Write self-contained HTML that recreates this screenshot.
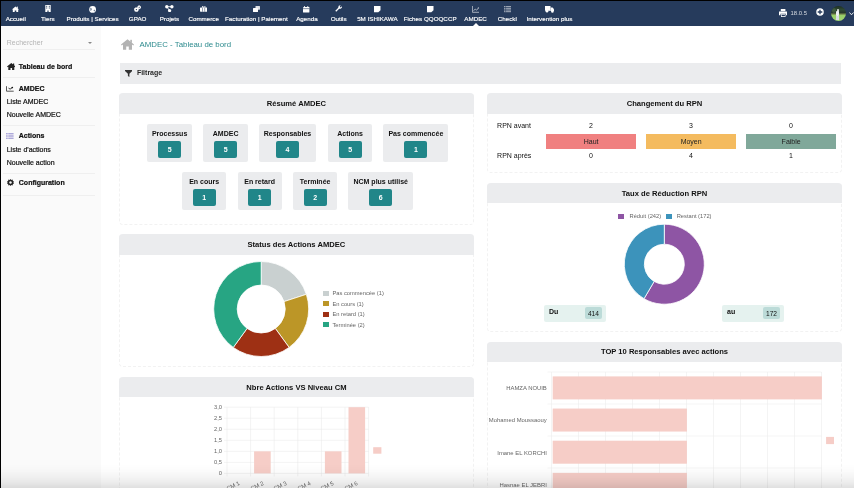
<!DOCTYPE html>
<html><head><meta charset="utf-8">
<style>
*{margin:0;padding:0;box-sizing:border-box}
html,body{width:854px;height:488px;overflow:hidden;background:#fff;font-family:"Liberation Sans",sans-serif;color:#222}
.a{position:absolute}
#frameT{left:0;top:0;width:854px;height:1px;background:#000}
#frameL{left:0;top:0;width:1px;height:488px;background:#000;z-index:50}
#nav{left:1px;top:1px;width:853px;height:24.5px;background:#263b5c}
.nt{position:absolute;top:15.2px;width:100px;color:#fff;font-size:6.25px;text-align:center;white-space:nowrap;-webkit-text-stroke:0.15px #fff}
#side{left:1px;top:25px;width:100px;height:463px;background:#fafafa}
.sl{position:absolute;left:5.7px;font-size:7px;color:#111;white-space:nowrap;-webkit-text-stroke:0.2px #111}
.sb{font-weight:bold;left:17.8px}
.hr{position:absolute;left:2.2px;width:91.5px;height:1px;background:#efefef}
.card{position:absolute;background:#fff;border:1px dashed #f2f2f2;border-radius:4px}
.ch{position:absolute;left:-1px;top:-1px;right:-1px;border-radius:4px 4px 0 0;height:20.4px;background:#ebecee;font-weight:bold;font-size:7.6px;text-align:center;line-height:22.4px;color:#111}
.box{position:absolute;height:38px;background:#ebecee;border-radius:2px;text-align:center}
.box .l{position:absolute;top:6px;left:0;right:0;font-size:7px;font-weight:bold;color:#111;white-space:nowrap}
.box .b{position:absolute;top:17px;left:50%;margin-left:-11.5px;width:23px;height:16.5px;background:#218689;border-radius:2px;color:#fff;font-weight:bold;font-size:7px;line-height:17.6px}
.rt{position:absolute;font-size:7px;color:#111;white-space:nowrap}
.lv{position:absolute;height:14.6px;width:90.3px;font-size:7px;text-align:center;line-height:15.6px;color:#222}
.leg{position:absolute;font-size:5.75px;color:#666;white-space:nowrap}
.sq{position:absolute;width:6px;height:5px}
#fade{left:0;top:464px;width:854px;height:24px;background:linear-gradient(to bottom,rgba(0,0,0,0) 0%,rgba(0,0,0,0.012) 25%,rgba(0,0,0,0.035) 50%,rgba(0,0,0,0.07) 75%,rgba(0,0,0,0.12) 100%);z-index:40}
</style></head><body><div id="wrap" style="position:absolute;left:0;top:0;width:854px;height:488px;will-change:transform">
<div class="a" id="frameT"></div>
<div class="a" id="frameL"></div>
<div class="a" id="side">
  <div class="sl" style="top:13.5px;color:#b5b5b5;-webkit-text-stroke:0">Rechercher</div>
  <div class="a" style="left:86.5px;top:16.5px;width:0;height:0;border-left:2px solid transparent;border-right:2px solid transparent;border-top:2.5px solid #888"></div>
  <div class="hr" style="top:24px"></div>
  <div class="sl sb" style="top:37.5px">Tableau de bord</div>
  <div class="hr" style="top:52px"></div>
  <div class="sl sb" style="top:60px">AMDEC</div>
  <div class="sl" style="top:72.8px">Liste AMDEC</div>
  <div class="sl" style="top:86.4px">Nouvelle AMDEC</div>
  <div class="hr" style="top:99.5px"></div>
  <div class="sl sb" style="top:107px">Actions</div>
  <div class="sl" style="top:121px">Liste d'actions</div>
  <div class="sl" style="top:134.2px">Nouvelle action</div>
  <div class="hr" style="top:147.5px"></div>
  <div class="sl sb" style="top:154.3px">Configuration</div>
  <div class="hr" style="top:169.5px"></div>
</div>
<div class="a" id="nav"></div>
<div class="nt" style="left:-34.25px">Accueil</div>
<svg class="a" style="left:12.40px;top:5.6px" width="7" height="7.5" viewBox="0 0 7 7.5"><path d="M3.5 0.4L6.8 3.2L6.2 3.7V6H4.3V4.5H2.7V6H0.8V3.7L0.2 3.2Z" fill="#fff"/><rect x="4.8" y="0.6" width="1" height="1.8" fill="#fff"/></svg>
<div class="nt" style="left:-2.20px">Tiers</div>
<svg class="a" style="left:44.90px;top:5.2px" width="6" height="7.5" viewBox="0 0 6 7.5"><path d="M0.3 0H5.7V7H3.6V5.4H2.4V7H0.3Z" fill="#fff"/><rect x="1.2" y="0.8" width="1" height="1" fill="#263b5c"/><rect x="3.8" y="0.8" width="1" height="1" fill="#263b5c"/><rect x="1.2" y="2.5" width="1" height="1" fill="#263b5c"/><rect x="3.8" y="2.5" width="1" height="1" fill="#263b5c"/></svg>
<div class="nt" style="left:42.55px">Produits | Services</div>
<svg class="a" style="left:89.00px;top:5.6px" width="7.4" height="7.5" viewBox="0 0 7.4 7.5"><circle cx="3.6" cy="3.4" r="3.4" fill="#fff"/><path d="M1.5 1.5Q3 2.5 2.5 4L1.6 5Z M4.5 4.5L5.8 3.5L5.5 5.5Z" fill="#263b5c"/></svg>
<div class="nt" style="left:87.65px">GPAO</div>
<svg class="a" style="left:133.9px;top:5.2px" width="7.4" height="7" viewBox="0 0 7.4 7"><circle cx="2.4" cy="4.6" r="2.2" fill="#fff" stroke="#fff" stroke-width="0.6" stroke-dasharray="0.8 0.6"/><circle cx="2.4" cy="4.6" r="0.7" fill="#263b5c"/><circle cx="5.2" cy="2.2" r="1.7" fill="#fff" stroke="#fff" stroke-width="0.5" stroke-dasharray="0.7 0.5"/><circle cx="5.2" cy="2.2" r="0.55" fill="#263b5c"/></svg>
<div class="nt" style="left:119.45px">Projets</div>
<svg class="a" style="left:165.1px;top:5.2px" width="8.7" height="7.2" viewBox="0 0 8.7 7.2"><path d="M1.8 1.7H7M1.8 1.7L4.6 5.6" stroke="#fff" stroke-width="0.9"/><circle cx="1.8" cy="1.7" r="1.7" fill="#fff"/><circle cx="6.9" cy="1.7" r="1.7" fill="#fff"/><circle cx="4.6" cy="5.6" r="1.6" fill="#fff"/></svg>
<div class="nt" style="left:153.70px">Commerce</div>
<svg class="a" style="left:199.70px;top:5.9px" width="7.5" height="7.5" viewBox="0 0 7.5 7.5"><rect x="0" y="1.5" width="7.5" height="4.2" rx="0.6" fill="#fff"/><rect x="2.5" y="0" width="2.5" height="1.8" fill="none" stroke="#fff" stroke-width="0.7"/><rect x="2.4" y="1.5" width="0.5" height="4.2" fill="#263b5c"/><rect x="4.6" y="1.5" width="0.5" height="4.2" fill="#263b5c"/></svg>
<div class="nt" style="left:206.40px">Facturation | Paiement</div>
<svg class="a" style="left:253.00px;top:5.7px" width="7.2" height="7.5" viewBox="0 0 7.2 7.5"><rect x="2.5" y="0" width="4.5" height="3.8" rx="0.5" fill="#fff" opacity="0.85"/><rect x="0" y="2" width="5" height="4" rx="0.5" fill="#fff"/></svg>
<div class="nt" style="left:256.95px">Agenda</div>
<svg class="a" style="left:303.20px;top:5.7px" width="6.4" height="7.5" viewBox="0 0 6.4 7.5"><rect x="0" y="1" width="6.4" height="5.6" rx="0.5" fill="#fff"/><rect x="1.2" y="0" width="0.8" height="1.5" fill="#fff"/><rect x="4.4" y="0" width="0.8" height="1.5" fill="#fff"/><rect x="0" y="2.5" width="6.4" height="0.6" fill="#263b5c"/></svg>
<div class="nt" style="left:288.65px">Outils</div>
<svg class="a" style="left:334.90px;top:5.4px" width="7.2" height="7.5" viewBox="0 0 7.2 7.5"><path d="M7 1.2L5.6 2.4L4.8 1.8L5.6 0.3A2.2 2.2 0 0 0 3.3 2.8L0.3 5.8L1.2 6.7L4.2 3.7A2.2 2.2 0 0 0 7 1.2Z" fill="#fff"/></svg>
<div class="nt" style="left:327.40px">5M ISHIKAWA</div>
<svg class="a" style="left:374.40px;top:5.5px" width="6.5" height="7.5" viewBox="0 0 6.5 7.5"><path d="M0 0H6.5V4.3L4.3 6.3H0Z" fill="#fff"/></svg>
<div class="nt" style="left:380.20px">Fiches QQOQCCP</div>
<svg class="a" style="left:427.05px;top:5.5px" width="6.5" height="7.5" viewBox="0 0 6.5 7.5"><path d="M0 0H6.5V4.3L4.3 6.3H0Z" fill="#fff"/></svg>
<div class="nt" style="left:425.60px">AMDEC</div>
<svg class="a" style="left:471.60px;top:5.5px;opacity:0.75" width="7.4" height="7.5" viewBox="0 0 7.4 7.5"><path d="M0.4 0V6.3H7.4" stroke="#fff" stroke-width="0.8" fill="none"/><path d="M1.6 4.8L3.2 3L4.6 4.2L6.6 1.8" stroke="#fff" stroke-width="0.8" fill="none"/><path d="M5.6 1.4H7V2.8Z" fill="#fff"/></svg>
<div class="nt" style="left:457.30px">Checkl</div>
<svg class="a" style="left:504.35px;top:5.5px;opacity:0.8" width="7" height="7.5" viewBox="0 0 7 7.5"><path d="M0 0.6H7M0 2.3H7M0 4H7M0 5.7H7" stroke="#fff" stroke-width="0.9" opacity="0.85"/><path d="M1.6 0V6.4" stroke="#263b5c" stroke-width="0.5"/></svg>
<div class="nt" style="left:499.55px">Intervention plus</div>
<svg class="a" style="left:544.85px;top:5.6px" width="9.4" height="7.5" viewBox="0 0 9.4 7.5"><rect x="0" y="0" width="5.5" height="4.8" fill="#fff"/><path d="M5.5 1.6H7.6L9.3 3.5V5H5.5Z" fill="#fff"/><circle cx="2" cy="5.3" r="1.3" fill="#fff"/><circle cx="7.4" cy="5.5" r="1.3" fill="#fff"/></svg>
<svg class="a" style="left:778.7px;top:9.2px" width="8.5" height="8" viewBox="0 0 8.5 8"><path d="M1.8 0H6.4V2.2H1.8Z" fill="#fff"/><path d="M0 2.6H8.5V6.2H7V4.8H1.5V6.2H0Z" fill="#fff"/><rect x="2" y="5.2" width="4.5" height="2.8" fill="#fff"/><rect x="2.6" y="5.8" width="3.3" height="1.4" fill="#263b5c"/></svg>
<div class="a" style="left:790.6px;top:9.8px;font-size:5.9px;color:#fff;opacity:0.8">18.0.5</div>
<svg class="a" style="left:815.2px;top:7.4px" width="10" height="10" viewBox="0 0 10 10"><circle cx="5" cy="5" r="3.75" fill="#fff"/><path d="M5 2.7V7.3M2.7 5H7.3" stroke="#263b5c" stroke-width="1.3"/></svg>
<div class="a" style="left:830.5px;top:5.6px;width:15.2px;height:15px;border-radius:50%;overflow:hidden;background:linear-gradient(to bottom,#1e2f22 0%,#2f4a33 25%,#26382a 45%,#6d7a4a 53%,#98cf68 62%,#a2d673 100%)"><div class="a" style="left:1px;top:2px;width:4px;height:5px;background:#4d6a4a;border-radius:50%;opacity:0.6"></div><div class="a" style="left:6.3px;top:3.8px;width:2.2px;height:2.2px;background:#d9d9d9;border-radius:50%"></div><div class="a" style="left:5.6px;top:5.8px;width:3.4px;height:4.8px;background:#eef0f4;border-radius:1px"></div><div class="a" style="left:5.9px;top:10.5px;width:2.8px;height:3.8px;background:#d8dce2"></div></div>
<svg class="a" style="left:848.8px;top:11.6px" width="5" height="3.6" viewBox="0 0 5 3.6"><path d="M0.4 0.5L2.5 2.8L4.6 0.5" stroke="#fff" stroke-width="0.9" fill="none"/></svg>
<svg class="a" style="left:472.5px;top:22.8px" width="6" height="3" viewBox="0 0 6 3"><path d="M0 3L3 0L6 3Z" fill="#fff"/></svg>



<!-- breadcrumb -->
<div class="a" style="left:139.6px;top:40px;font-size:7.85px;color:#2d8b8e;white-space:nowrap">AMDEC - Tableau de bord</div>

<!-- filtrage -->
<div class="a" style="left:119.7px;top:63.2px;width:721.5px;height:20.5px;background:#ebecee"></div>
<div class="a" style="left:136.9px;top:69px;font-size:7px;font-weight:bold;color:#2a2a2a">Filtrage</div>

<!-- Resume card -->
<div class="card" style="left:119px;top:93.4px;width:354.8px;height:131.9px">
  <div class="ch" style="height:20.4px">Résumé AMDEC</div>
</div>

<!-- Changement RPN -->
<div class="card" style="left:487.2px;top:93.4px;width:354.6px;height:79.9px">
  <div class="ch" style="height:20.4px">Changement du RPN</div>
</div>

<!-- Taux -->
<div class="card" style="left:487.2px;top:182.7px;width:354.6px;height:149px">
  <div class="ch" style="height:20.7px;line-height:21.6px">Taux de Réduction RPN</div>
</div>

<!-- Status -->
<div class="card" style="left:119px;top:234.3px;width:354.8px;height:132.8px">
  <div class="ch" style="height:21.2px;line-height:22px">Status des Actions AMDEC</div>
</div>

<!-- Nbre -->
<div class="card" style="left:119px;top:377.1px;width:354.8px;height:120px">
  <div class="ch" style="height:20.3px;line-height:21.8px">Nbre Actions VS Niveau CM</div>
</div>

<!-- TOP 10 -->
<div class="card" style="left:487.2px;top:342px;width:354.6px;height:160px">
  <div class="ch" style="height:19.8px;line-height:20.8px">TOP 10 Responsables avec actions</div>
</div>


<svg class="a" style="left:6.5px;top:63px" width="8.6" height="7.2" viewBox="0 0 8.6 7.2"><path d="M4.3 0L8.6 3.6L7.9 4.3L7.3 3.8V7.2H5.1V5H3.5V7.2H1.3V3.8L0.7 4.3L0 3.6Z" fill="#222"/><rect x="6" y="0.5" width="1.2" height="2" fill="#222"/></svg>
<svg class="a" style="left:6.1px;top:86px" width="7.8" height="5.8" viewBox="0 0 7.8 5.8"><path d="M0.5 0.2V5.2H7.7" stroke="#555" stroke-width="1" fill="none"/><path d="M2.5 2.1L4.1 3.1L6.3 1.6" stroke="#222" stroke-width="0.9" fill="none"/><circle cx="6.3" cy="1.5" r="0.85" fill="#111"/></svg>
<svg class="a" style="left:6.2px;top:132.8px" width="7.6" height="6" viewBox="0 0 7.6 6"><path d="M0 0.6H7.6M0 2.2H7.6M0 3.8H7.6M0 5.4H7.6" stroke="#a5a0d6" stroke-width="1"/><path d="M2 0V6" stroke="#f8f8f8" stroke-width="0.5"/></svg>
<svg class="a" style="left:6.8px;top:179px" width="7" height="7" viewBox="0 0 7 7"><path d="M3.5 0L4.3 0.9L5.6 0.6L5.9 1.9L7 2.6L6.4 3.5L7 4.4L5.9 5.1L5.6 6.4L4.3 6.1L3.5 7L2.7 6.1L1.4 6.4L1.1 5.1L0 4.4L0.6 3.5L0 2.6L1.1 1.9L1.4 0.6L2.7 0.9Z" fill="#222"/><circle cx="3.5" cy="3.5" r="1.2" fill="#f8f8f8"/></svg>
<svg class="a" style="left:120.7px;top:39px" width="13" height="10.8" viewBox="0 0 13 10.8"><path d="M6.5 0.3L13 5.6L12.3 6.4L11 5.4V10.8H7.8V7.4H5.2V10.8H2V5.4L0.7 6.4L0 5.6Z" fill="#b3b3b3"/><rect x="9.3" y="0.8" width="1.6" height="3" fill="#b3b3b3"/></svg>
<svg class="a" style="left:124.8px;top:69.7px" width="7.3" height="7" viewBox="0 0 7.3 7"><path d="M0 0H7.3V1L4.4 3.8V7L2.9 6V3.8L0 1Z" fill="#333"/></svg>
<!--CONTENT-->
<div class="box" style="left:147px;top:124px;width:45.2px"><div class="l">Processus</div><div class="b">5</div></div>
<div class="box" style="left:203.3px;top:124px;width:44.7px"><div class="l">AMDEC</div><div class="b">5</div></div>
<div class="box" style="left:258.6px;top:124px;width:57.8px"><div class="l">Responsables</div><div class="b">4</div></div>
<div class="box" style="left:328px;top:124px;width:44.2px"><div class="l">Actions</div><div class="b">5</div></div>
<div class="box" style="left:383.3px;top:124px;width:65.1px"><div class="l">Pas commencée</div><div class="b">1</div></div>
<div class="box" style="left:182.2px;top:172.2px;width:43.9px"><div class="l">En cours</div><div class="b">1</div></div>
<div class="box" style="left:237.5px;top:172.2px;width:44.2px"><div class="l">En retard</div><div class="b">1</div></div>
<div class="box" style="left:292.9px;top:172.2px;width:44.5px"><div class="l">Terminée</div><div class="b">2</div></div>
<div class="box" style="left:348.3px;top:172.2px;width:64.8px"><div class="l">NCM plus utilisé</div><div class="b">6</div></div>
<div class="rt" style="left:497.1px;top:122.2px">RPN avant</div>
<div class="rt" style="left:497.1px;top:151.7px">RPN après</div>
<div class="rt" style="left:571px;width:40px;text-align:center;top:122.2px">2</div>
<div class="rt" style="left:571px;width:40px;text-align:center;top:151.7px">0</div>
<div class="rt" style="left:671px;width:40px;text-align:center;top:122.2px">3</div>
<div class="rt" style="left:671px;width:40px;text-align:center;top:151.7px">4</div>
<div class="rt" style="left:771px;width:40px;text-align:center;top:122.2px">0</div>
<div class="rt" style="left:771px;width:40px;text-align:center;top:151.7px">1</div>
<div class="lv" style="left:546px;top:134.2px;background:#f08080">Haut</div>
<div class="lv" style="left:646px;top:134.2px;background:#f4bb5f">Moyen</div>
<div class="lv" style="left:746px;top:134.2px;background:#80a89a">Faible</div>
<div class="sq" style="left:618px;top:213.9px;background:#8e55a4"></div>
<div class="leg" style="left:629.5px;top:212.7px">Réduit (242)</div>
<div class="sq" style="left:665.6px;top:213.9px;background:#3c93bb"></div>
<div class="leg" style="left:676.7px;top:212.7px">Restant (172)</div>
<svg class="a" style="left:0;top:0" width="854" height="488">
<path d="M664.30 224.20A40 40 0 1 1 644.04 298.69L654.17 281.44A20 20 0 1 0 664.30 244.20Z" fill="#8e55a4" stroke="#fff" stroke-width="0.8"/>
<path d="M644.04 298.69A40 40 0 0 1 664.30 224.20L664.30 244.20A20 20 0 0 0 654.17 281.44Z" fill="#3c93bb" stroke="#fff" stroke-width="0.8"/>
<path d="M261.20 261.50A47.5 47.5 0 0 1 306.38 294.32L284.03 301.58A24 24 0 0 0 261.20 285.00Z" fill="#c9d0d0" stroke="#fff" stroke-width="0.8"/>
<path d="M306.38 294.32A47.5 47.5 0 0 1 289.12 347.43L275.31 328.42A24 24 0 0 0 284.03 301.58Z" fill="#bc9627" stroke="#fff" stroke-width="0.8"/>
<path d="M289.12 347.43A47.5 47.5 0 0 1 233.28 347.43L247.09 328.42A24 24 0 0 0 275.31 328.42Z" fill="#9e3014" stroke="#fff" stroke-width="0.8"/>
<path d="M233.28 347.43A47.5 47.5 0 0 1 261.20 261.50L261.20 285.00A24 24 0 0 0 247.09 328.42Z" fill="#27a583" stroke="#fff" stroke-width="0.8"/>
<line x1="227.00" y1="407.2" x2="227.00" y2="476.4" stroke="#e6e6e6" stroke-width="0.5"/>
<line x1="250.60" y1="407.2" x2="250.60" y2="476.4" stroke="#e6e6e6" stroke-width="0.5"/>
<line x1="274.20" y1="407.2" x2="274.20" y2="476.4" stroke="#e6e6e6" stroke-width="0.5"/>
<line x1="297.80" y1="407.2" x2="297.80" y2="476.4" stroke="#e6e6e6" stroke-width="0.5"/>
<line x1="321.40" y1="407.2" x2="321.40" y2="476.4" stroke="#e6e6e6" stroke-width="0.5"/>
<line x1="345.00" y1="407.2" x2="345.00" y2="476.4" stroke="#e6e6e6" stroke-width="0.5"/>
<line x1="368.60" y1="407.2" x2="368.60" y2="476.4" stroke="#e6e6e6" stroke-width="0.5"/>
<line x1="224" y1="407.20" x2="368.60" y2="407.20" stroke="#e6e6e6" stroke-width="0.5"/>
<line x1="224" y1="418.23" x2="368.60" y2="418.23" stroke="#e6e6e6" stroke-width="0.5"/>
<line x1="224" y1="429.27" x2="368.60" y2="429.27" stroke="#e6e6e6" stroke-width="0.5"/>
<line x1="224" y1="440.30" x2="368.60" y2="440.30" stroke="#e6e6e6" stroke-width="0.5"/>
<line x1="224" y1="451.33" x2="368.60" y2="451.33" stroke="#e6e6e6" stroke-width="0.5"/>
<line x1="224" y1="462.37" x2="368.60" y2="462.37" stroke="#e6e6e6" stroke-width="0.5"/>
<line x1="224" y1="473.40" x2="368.60" y2="473.40" stroke="#e6e6e6" stroke-width="0.5"/>
<rect x="254.10" y="451.33" width="16.6" height="22.07" fill="#f6cdc7"/>
<rect x="324.90" y="451.33" width="16.6" height="22.07" fill="#f6cdc7"/>
<rect x="348.50" y="407.20" width="16.6" height="66.20" fill="#f6cdc7"/>
<rect x="373.2" y="447.2" width="8.2" height="6.5" fill="#f6cdc7"/>
<line x1="551.50" y1="372" x2="551.50" y2="488" stroke="#e9e9e9" stroke-width="0.5"/>
<line x1="578.50" y1="372" x2="578.50" y2="488" stroke="#e9e9e9" stroke-width="0.5"/>
<line x1="605.50" y1="372" x2="605.50" y2="488" stroke="#e9e9e9" stroke-width="0.5"/>
<line x1="632.50" y1="372" x2="632.50" y2="488" stroke="#e9e9e9" stroke-width="0.5"/>
<line x1="659.50" y1="372" x2="659.50" y2="488" stroke="#e9e9e9" stroke-width="0.5"/>
<line x1="686.50" y1="372" x2="686.50" y2="488" stroke="#e9e9e9" stroke-width="0.5"/>
<line x1="713.50" y1="372" x2="713.50" y2="488" stroke="#e9e9e9" stroke-width="0.5"/>
<line x1="740.50" y1="372" x2="740.50" y2="488" stroke="#e9e9e9" stroke-width="0.5"/>
<line x1="767.50" y1="372" x2="767.50" y2="488" stroke="#e9e9e9" stroke-width="0.5"/>
<line x1="794.50" y1="372" x2="794.50" y2="488" stroke="#e9e9e9" stroke-width="0.5"/>
<line x1="821.50" y1="372" x2="821.50" y2="488" stroke="#e9e9e9" stroke-width="0.5"/>
<line x1="547.5" y1="372.00" x2="821.50" y2="372.00" stroke="#e9e9e9" stroke-width="0.5"/>
<line x1="547.5" y1="404.00" x2="821.50" y2="404.00" stroke="#e9e9e9" stroke-width="0.5"/>
<line x1="547.5" y1="436.00" x2="821.50" y2="436.00" stroke="#e9e9e9" stroke-width="0.5"/>
<line x1="547.5" y1="468.00" x2="821.50" y2="468.00" stroke="#e9e9e9" stroke-width="0.5"/>
<rect x="552.7" y="376.40" width="269.20" height="23" fill="#f6cdc7"/>
<rect x="552.7" y="408.55" width="134.20" height="23" fill="#f6cdc7"/>
<rect x="552.7" y="440.70" width="134.20" height="23" fill="#f6cdc7"/>
<rect x="552.7" y="472.85" width="134.20" height="23" fill="#f6cdc7"/>
<rect x="826.1" y="436.9" width="7.9" height="7.2" fill="#f6cdc7"/>
</svg>
<div class="leg" style="left:192px;width:30px;font-size:5.75px;text-align:right;top:403.50px">3,0</div>
<div class="leg" style="left:192px;width:30px;font-size:5.75px;text-align:right;top:414.53px">2,5</div>
<div class="leg" style="left:192px;width:30px;font-size:5.75px;text-align:right;top:425.57px">2,0</div>
<div class="leg" style="left:192px;width:30px;font-size:5.75px;text-align:right;top:436.60px">1,5</div>
<div class="leg" style="left:192px;width:30px;font-size:5.75px;text-align:right;top:447.63px">1,0</div>
<div class="leg" style="left:192px;width:30px;font-size:5.75px;text-align:right;top:458.67px">0,5</div>
<div class="leg" style="left:192px;width:30px;font-size:5.75px;text-align:right;top:469.70px">0</div>
<div class="leg" style="left:446.8px;width:100px;font-size:5.9px;text-align:right;top:385.20px">HAMZA NOUIB</div>
<div class="leg" style="left:446.8px;width:100px;font-size:5.9px;text-align:right;top:417.35px">Mohamed Moussaouy</div>
<div class="leg" style="left:446.8px;width:100px;font-size:5.9px;text-align:right;top:449.50px">Imane EL KORCHI</div>
<div class="leg" style="left:446.8px;width:100px;font-size:5.9px;text-align:right;top:481.65px">Hasnae EL JEBRI</div>
<div class="leg" style="left:178.00px;width:60px;text-align:right;top:479.5px;transform-origin:100% 0;transform:rotate(-26deg)">Niveau CM 1</div>
<div class="leg" style="left:201.60px;width:60px;text-align:right;top:479.5px;transform-origin:100% 0;transform:rotate(-26deg)">Niveau CM 2</div>
<div class="leg" style="left:225.20px;width:60px;text-align:right;top:479.5px;transform-origin:100% 0;transform:rotate(-26deg)">Niveau CM 3</div>
<div class="leg" style="left:248.80px;width:60px;text-align:right;top:479.5px;transform-origin:100% 0;transform:rotate(-26deg)">Niveau CM 4</div>
<div class="leg" style="left:272.40px;width:60px;text-align:right;top:479.5px;transform-origin:100% 0;transform:rotate(-26deg)">Niveau CM 5</div>
<div class="leg" style="left:296.00px;width:60px;text-align:right;top:479.5px;transform-origin:100% 0;transform:rotate(-26deg)">Niveau CM 6</div>
<div class="sq" style="left:323px;top:290.6px;width:6.2px;height:5px;background:#c9d0d0"></div>
<div class="leg" style="left:332.4px;top:289.9px">Pas commencée (1)</div>
<div class="sq" style="left:323px;top:301.2px;width:6.2px;height:5px;background:#bc9627"></div>
<div class="leg" style="left:332.4px;top:300.5px">En cours (1)</div>
<div class="sq" style="left:323px;top:311.8px;width:6.2px;height:5px;background:#9e3014"></div>
<div class="leg" style="left:332.4px;top:311.1px">En retard (1)</div>
<div class="sq" style="left:323px;top:322.4px;width:6.2px;height:5px;background:#27a583"></div>
<div class="leg" style="left:332.4px;top:321.7px">Terminée (2)</div>
<div class="a" style="left:543.9px;top:304.8px;width:62.3px;height:16.9px;background:#e5f2ef;border-radius:2px"></div>
<div class="a" style="left:548.9px;top:308.3px;font-size:7px;font-weight:bold;color:#111">Du</div>
<div class="a" style="left:585.1px;top:307.2px;width:16.6px;height:12px;background:#bcdbd8;border-radius:2px;font-size:6.6px;line-height:13px;text-align:center;color:#111">414</div>
<div class="a" style="left:722px;top:304.8px;width:62.3px;height:16.9px;background:#e5f2ef;border-radius:2px"></div>
<div class="a" style="left:727px;top:308.3px;font-size:7px;font-weight:bold;color:#111">au</div>
<div class="a" style="left:763.2px;top:307.2px;width:16.6px;height:12px;background:#bcdbd8;border-radius:2px;font-size:6.6px;line-height:13px;text-align:center;color:#111">172</div>
<!--/CONTENT-->
<div class="a" id="fade"></div>
</div></body></html>
